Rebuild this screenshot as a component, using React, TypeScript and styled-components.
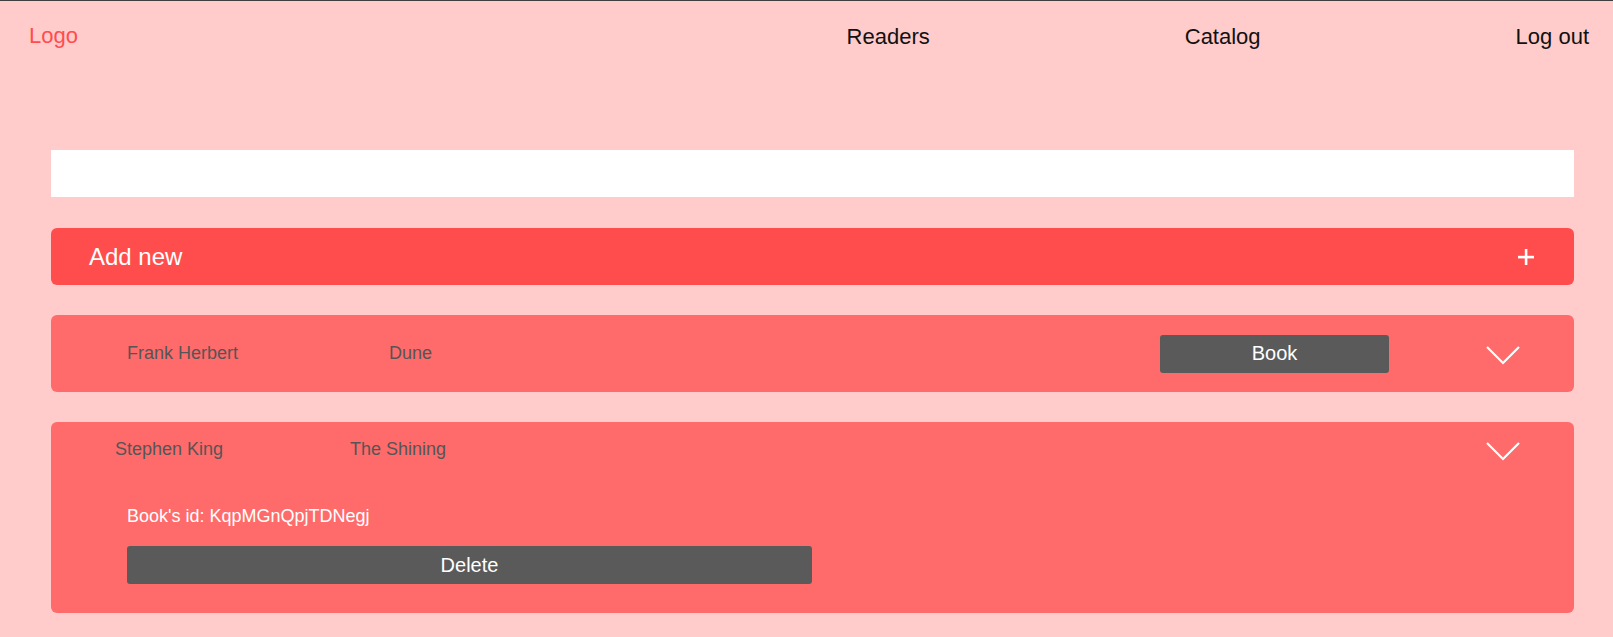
import React from "react";
import styled, { createGlobalStyle } from "styled-components";

const GlobalStyle = createGlobalStyle`
  html, body {
    margin: 0;
    padding: 0;
    background: #ffcccb;
    font-family: "Liberation Sans", Arial, sans-serif;
  }
  * { box-sizing: border-box; }
`;

const Page = styled.div`
  min-height: 637px;
  border-top: 1px solid #3f3f3f;
  background: #ffcccb;
`;

const Header = styled.header`
  display: flex;
  align-items: flex-start;
  justify-content: space-between;
  padding: 22px 24px 0 29px;
  height: 149px;
`;

const Logo = styled.a`
  font-size: 22px;
  color: #ff4d4d;
  text-decoration: none;
`;

const Nav = styled.nav`
  display: flex;
  gap: 255px;
  padding-top: 1px;
`;

const NavLink = styled.a`
  font-size: 22px;
  color: #111;
  text-decoration: none;
`;

const Main = styled.main`
  display: flex;
  flex-direction: column;
  gap: 30px;
  padding: 0 39px 0 51px;
`;

const SearchInput = styled.input`
  display: block;
  width: 100%;
  height: 47px;
  border: none;
  outline: none;
  background: #fff;
  margin-bottom: 1px;
  font-family: inherit;
  font-size: 18px;
  padding: 0 16px;
`;

const AddNewBar = styled.button`
  display: flex;
  align-items: center;
  justify-content: space-between;
  height: 57px;
  width: 100%;
  border: none;
  border-radius: 6px;
  background: #ff4d4d;
  color: #fff;
  font-family: inherit;
  font-size: 24px;
  padding: 0 40px 0 38px;
  cursor: pointer;
`;

const Card = styled.div`
  background: #ff6b6b;
  border-radius: 6px;
`;

const CardHeader = styled.div<{ $height: number; $padLeft: number }>`
  display: flex;
  align-items: center;
  height: ${(p) => p.$height}px;
  padding: 0 54px 0 ${(p) => p.$padLeft}px;
`;

const Author = styled.span<{ $width: number }>`
  width: ${(p) => p.$width}px;
  font-size: 18px;
  color: #555;
`;

const Title = styled.span`
  flex: 1;
  font-size: 18px;
  color: #555;
`;

const DarkButton = styled.button<{ $width: number }>`
  width: ${(p) => p.$width}px;
  height: 38px;
  border: none;
  border-radius: 3px;
  background: #5a5a5a;
  color: #fff;
  font-family: inherit;
  font-size: 20px;
  cursor: pointer;
  padding: 0;
`;

const ChevronBox = styled.span<{ $gap: number }>`
  display: flex;
  margin-left: ${(p) => p.$gap}px;
  padding-top: 3px;
`;

const Details = styled.div`
  display: flex;
  flex-direction: column;
  align-items: flex-start;
  gap: 19px;
  padding: 29px 0 29px 76px;
`;

const IdText = styled.span`
  font-size: 18px;
  color: #fff;
  line-height: 21px;
`;

const Chevron = () => (
  <svg width="34" height="19" viewBox="0 0 34 19">
    <polyline
      points="1,1 17,17 33,1"
      fill="none"
      stroke="#fff"
      strokeWidth="2.2"
    />
  </svg>
);

const Plus = () => (
  <svg width="16" height="16" viewBox="0 0 16 16">
    <rect x="6.8" y="0" width="2.6" height="16" fill="#fff" />
    <rect x="0" y="6.8" width="16" height="2.6" fill="#fff" />
  </svg>
);

export default function App() {
  return (
    <Page>
      <GlobalStyle />
      <Header>
        <Logo>Logo</Logo>
        <Nav>
          <NavLink>Readers</NavLink>
          <NavLink>Catalog</NavLink>
          <NavLink>Log out</NavLink>
        </Nav>
      </Header>
      <Main>
        <SearchInput />
        <AddNewBar>
          <span>Add new</span>
          <Plus />
        </AddNewBar>
        <Card>
          <CardHeader $height={77} $padLeft={76}>
            <Author $width={262}>Frank Herbert</Author>
            <Title>Dune</Title>
            <DarkButton $width={229}>Book</DarkButton>
            <ChevronBox $gap={97}>
              <Chevron />
            </ChevronBox>
          </CardHeader>
        </Card>
        <Card>
          <CardHeader $height={55} $padLeft={64}>
            <Author $width={235}>Stephen King</Author>
            <Title>The Shining</Title>
            <ChevronBox $gap={0}>
              <Chevron />
            </ChevronBox>
          </CardHeader>
          <Details>
            <IdText>Book's id: KqpMGnQpjTDNegj</IdText>
            <DarkButton $width={685}>Delete</DarkButton>
          </Details>
        </Card>
      </Main>
    </Page>
  );
}
